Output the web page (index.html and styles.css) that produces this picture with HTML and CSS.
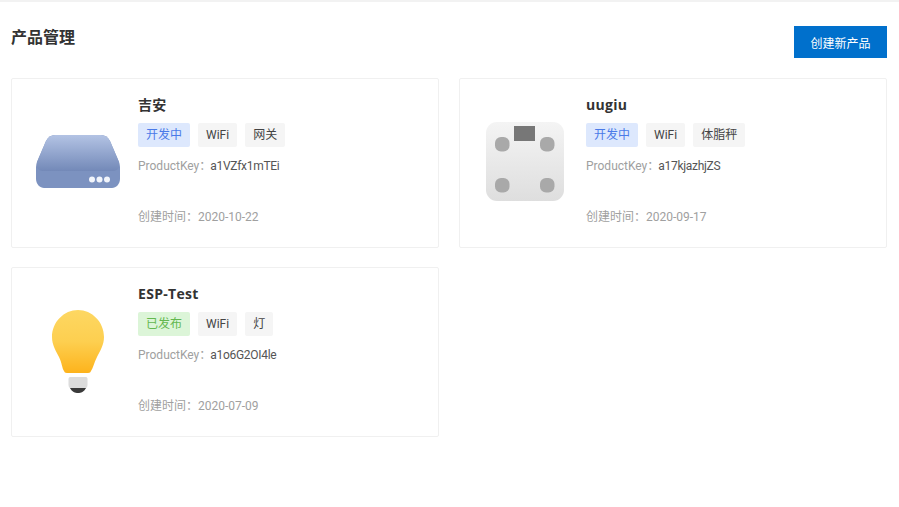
FILE: index.html
```html
<!DOCTYPE html>
<html lang="zh-CN">
<head>
<meta charset="utf-8">
<title>产品管理</title>
<link rel="stylesheet" href="styles.css">
</head>
<body>
<main class="page">
  <header class="head">
    <h1 class="title">产品管理</h1>
    <button class="create">创建新产品</button>
  </header>
  <section class="grid">
    <article class="card">
      <div class="pic">
        <svg width="84" height="53" viewBox="0 0 84 53">
          <defs><linearGradient id="g1" x1="0" y1="0" x2="0" y2="1"><stop offset="0" stop-color="#b3c3e4"/><stop offset="1" stop-color="#7389b8"/></linearGradient></defs>
          <path d="M19 0H65C69 0 72 2 74 6L83 27 84 32V44C84 49 80 53 76 53H8C4 53 0 49 0 44V32L1 27 10 6C12 2 15 0 19 0Z" fill="#7c92c0"/>
          <path d="M19 0H65C69 0 72 2 74 6L83 27C84 31 83 35 78 36H6C1 35 0 31 1 27L10 6C12 2 15 0 19 0Z" fill="url(#g1)"/>
          <circle cx="56" cy="44.500" r="3" fill="#f2f5fb"/><circle cx="63.500" cy="44.500" r="3" fill="#f2f5fb"/><circle cx="71" cy="44.500" r="3" fill="#f2f5fb"/>
        </svg>
      </div>
      <div class="info">
        <h2 class="name">吉安</h2>
        <div class="tags"><span class="tag dev">开发中</span><span class="tag">WiFi</span><span class="tag">网关</span></div>
        <p class="key">ProductKey：<span class="val">a1VZfx1mTEi</span></p>
        <p class="date">创建时间：2020-10-22</p>
      </div>
    </article>
    <article class="card">
      <div class="pic">
        <svg width="80" height="79" viewBox="0 0 80 79">
          <defs><linearGradient id="g2" x1="0" y1="0" x2="0" y2="1"><stop offset="0" stop-color="#f4f4f4"/><stop offset="1" stop-color="#dedede"/></linearGradient></defs>
          <rect width="78" height="79" rx="11" fill="url(#g2)"/>
          <rect x="28" y="4" width="21" height="15" fill="#777"/>
          <rect x="9" y="15" width="14.500" height="14.500" rx="6" fill="#a9a9a9"/><rect x="54" y="15" width="14.500" height="14.500" rx="6" fill="#a9a9a9"/>
          <rect x="9" y="56" width="14.500" height="14.500" rx="6" fill="#a9a9a9"/><rect x="54" y="56" width="14.500" height="14.500" rx="6" fill="#a9a9a9"/>
        </svg>
      </div>
      <div class="info">
        <h2 class="name">uugiu</h2>
        <div class="tags"><span class="tag dev">开发中</span><span class="tag">WiFi</span><span class="tag">体脂秤</span></div>
        <p class="key">ProductKey：<span class="val">a17kjazhjZS</span></p>
        <p class="date">创建时间：2020-09-17</p>
      </div>
    </article>
    <article class="card">
      <div class="pic">
        <svg width="52" height="85" viewBox="0 -2 52 85">
          <defs><linearGradient id="g3" x1="0" y1="0" x2="0" y2="1"><stop offset="0" stop-color="#fdd762"/><stop offset="0.5" stop-color="#fdcf50"/><stop offset="1" stop-color="#fdb31c"/></linearGradient></defs>
          <path d="M26 0C40 0 52 12 52 27C52 35 48 41 45 47C42 53 41 58 39 61C38.500 62 38 63 36 63H15C13 63 12.500 62 12 61C10 58 10 53 7 47C4 41 0 35 0 27C0 12 12 0 26 0Z" fill="url(#g3)"/>
          <path d="M18 67H34C35 67 35.500 68 35.500 69V75C35.500 77 34 79 32 79H20C18 79 16.500 77 16.500 75V69C16.500 68 17 67 18 67Z" fill="#dcdcdc"/>
          <path d="M18 78H34C32 82 29 83 26 83C23 83 20 82 18 78Z" fill="#3a3a3a"/>
        </svg>
      </div>
      <div class="info">
        <h2 class="name">ESP-Test</h2>
        <div class="tags"><span class="tag ok">已发布</span><span class="tag">WiFi</span><span class="tag">灯</span></div>
        <p class="key">ProductKey：<span class="val">a1o6G2OI4le</span></p>
        <p class="date">创建时间：2020-07-09</p>
      </div>
    </article>
  </section>
</main>
</body>
</html>
```

FILE: styles.css
```css
* { box-sizing: border-box; }
html, body { margin: 0; background: #fff; }
body {
  font-family: Roboto, "Noto Sans CJK SC", sans-serif;
  color: #333;
  overflow: hidden;
}
.page {
  border-top: 2px solid #f2f2f2;
  padding: 24px 12px 0 11px;
  height: 507px;
}
.head {
  display: flex;
  justify-content: space-between;
  align-items: flex-start;
  height: 52px;
}
.title {
  margin: 0;
  padding-top: 1px;
  font-size: 16px;
  line-height: 22px;
  font-weight: 700;
  color: #333;
}
.create {
  width: 93px;
  height: 32px;
  border: 0;
  padding: 5px 0 0;
  border-radius: 0;
  background: #0070cc;
  color: #fff;
  font: 12px/27px Roboto, "Noto Sans CJK SC", sans-serif;
}
.grid {
  display: grid;
  grid-template-columns: 428px 428px;
  grid-auto-rows: 170px;
  column-gap: 20px;
  row-gap: 19px;
}
.card {
  display: flex;
  border: 1px solid #f0f0f0;
  border-radius: 2px;
  background: #fff;
}
.pic {
  width: 126px;
  padding: 0 0 3px 6px;
  flex: none;
  display: flex;
  align-items: center;
  justify-content: center;
}
.pic svg { display: block; }
.info {
  flex: 1;
  padding-top: 16px;
  min-width: 0;
}
.name {
  margin: 0;
  font-family: "Open Sans", "Noto Sans CJK SC", sans-serif;
  font-size: 14px;
  line-height: 20px;
  font-weight: 700;
  letter-spacing: 0.3px;
  color: #333;
}
.tags {
  display: flex;
  gap: 8px;
  margin-top: 8px;
}
.tag {
  height: 24px;
  padding: 1px 8px 0;
  font-size: 12px;
  line-height: 23px;
  background: #f5f5f5;
  color: #444;
  border-radius: 2px;
}
.tag.dev { background: #dde8fd; color: #4a7ae8; }
.tag.ok { background: #dcf5d8; color: #63b84f; }
.key {
  margin: 10px 0 0;
  font-size: 12px;
  line-height: 18px;
  color: #a0a0a0;
}
.val {
  margin-left: -1px;
  letter-spacing: -0.3px;
  color: #555;
}
.date {
  margin: 33px 0 0;
  font-size: 12px;
  line-height: 18px;
  color: #a0a0a0;
}
```
